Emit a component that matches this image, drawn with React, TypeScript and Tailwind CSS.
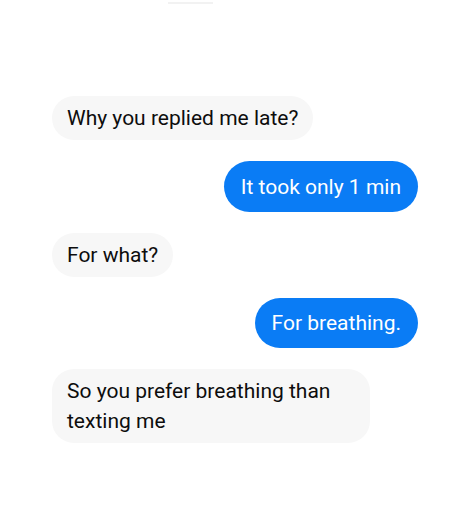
import React from "react";

const font = { fontFamily: "Roboto, 'Noto Sans', sans-serif" };

export default function App() {
  return (
    <div className="w-[450px] h-[523px] bg-white relative overflow-hidden" style={font}>
      <div className="absolute left-[168px] top-[2px] w-[45px] h-[2px] bg-[#f2f2f2]" />
      <div className="flex flex-col gap-[21px] pt-[96px] pl-[52px] pr-[32px] text-[21px] leading-[28px]">
        <div className="self-start bg-[#f7f7f7] text-[#0d0d0d] rounded-full h-[44px] flex items-center px-[15px]">
          Why you replied me late?
        </div>
        <div className="self-end bg-[#0a7cf5] text-white rounded-full h-[51px] flex items-center px-[17px]">
          It took only 1 min
        </div>
        <div className="self-start bg-[#f7f7f7] text-[#0d0d0d] rounded-full h-[44px] flex items-center px-[15px]">
          For what?
        </div>
        <div className="self-end bg-[#0a7cf5] text-white rounded-full h-[50px] flex items-center px-[17px]">
          For breathing.
        </div>
        <div className="self-start bg-[#f7f7f7] text-[#0d0d0d] rounded-[22px] w-[318px] px-[15px] py-[7px] leading-[30px]">
          So you prefer breathing than texting me
        </div>
      </div>
    </div>
  );
}
